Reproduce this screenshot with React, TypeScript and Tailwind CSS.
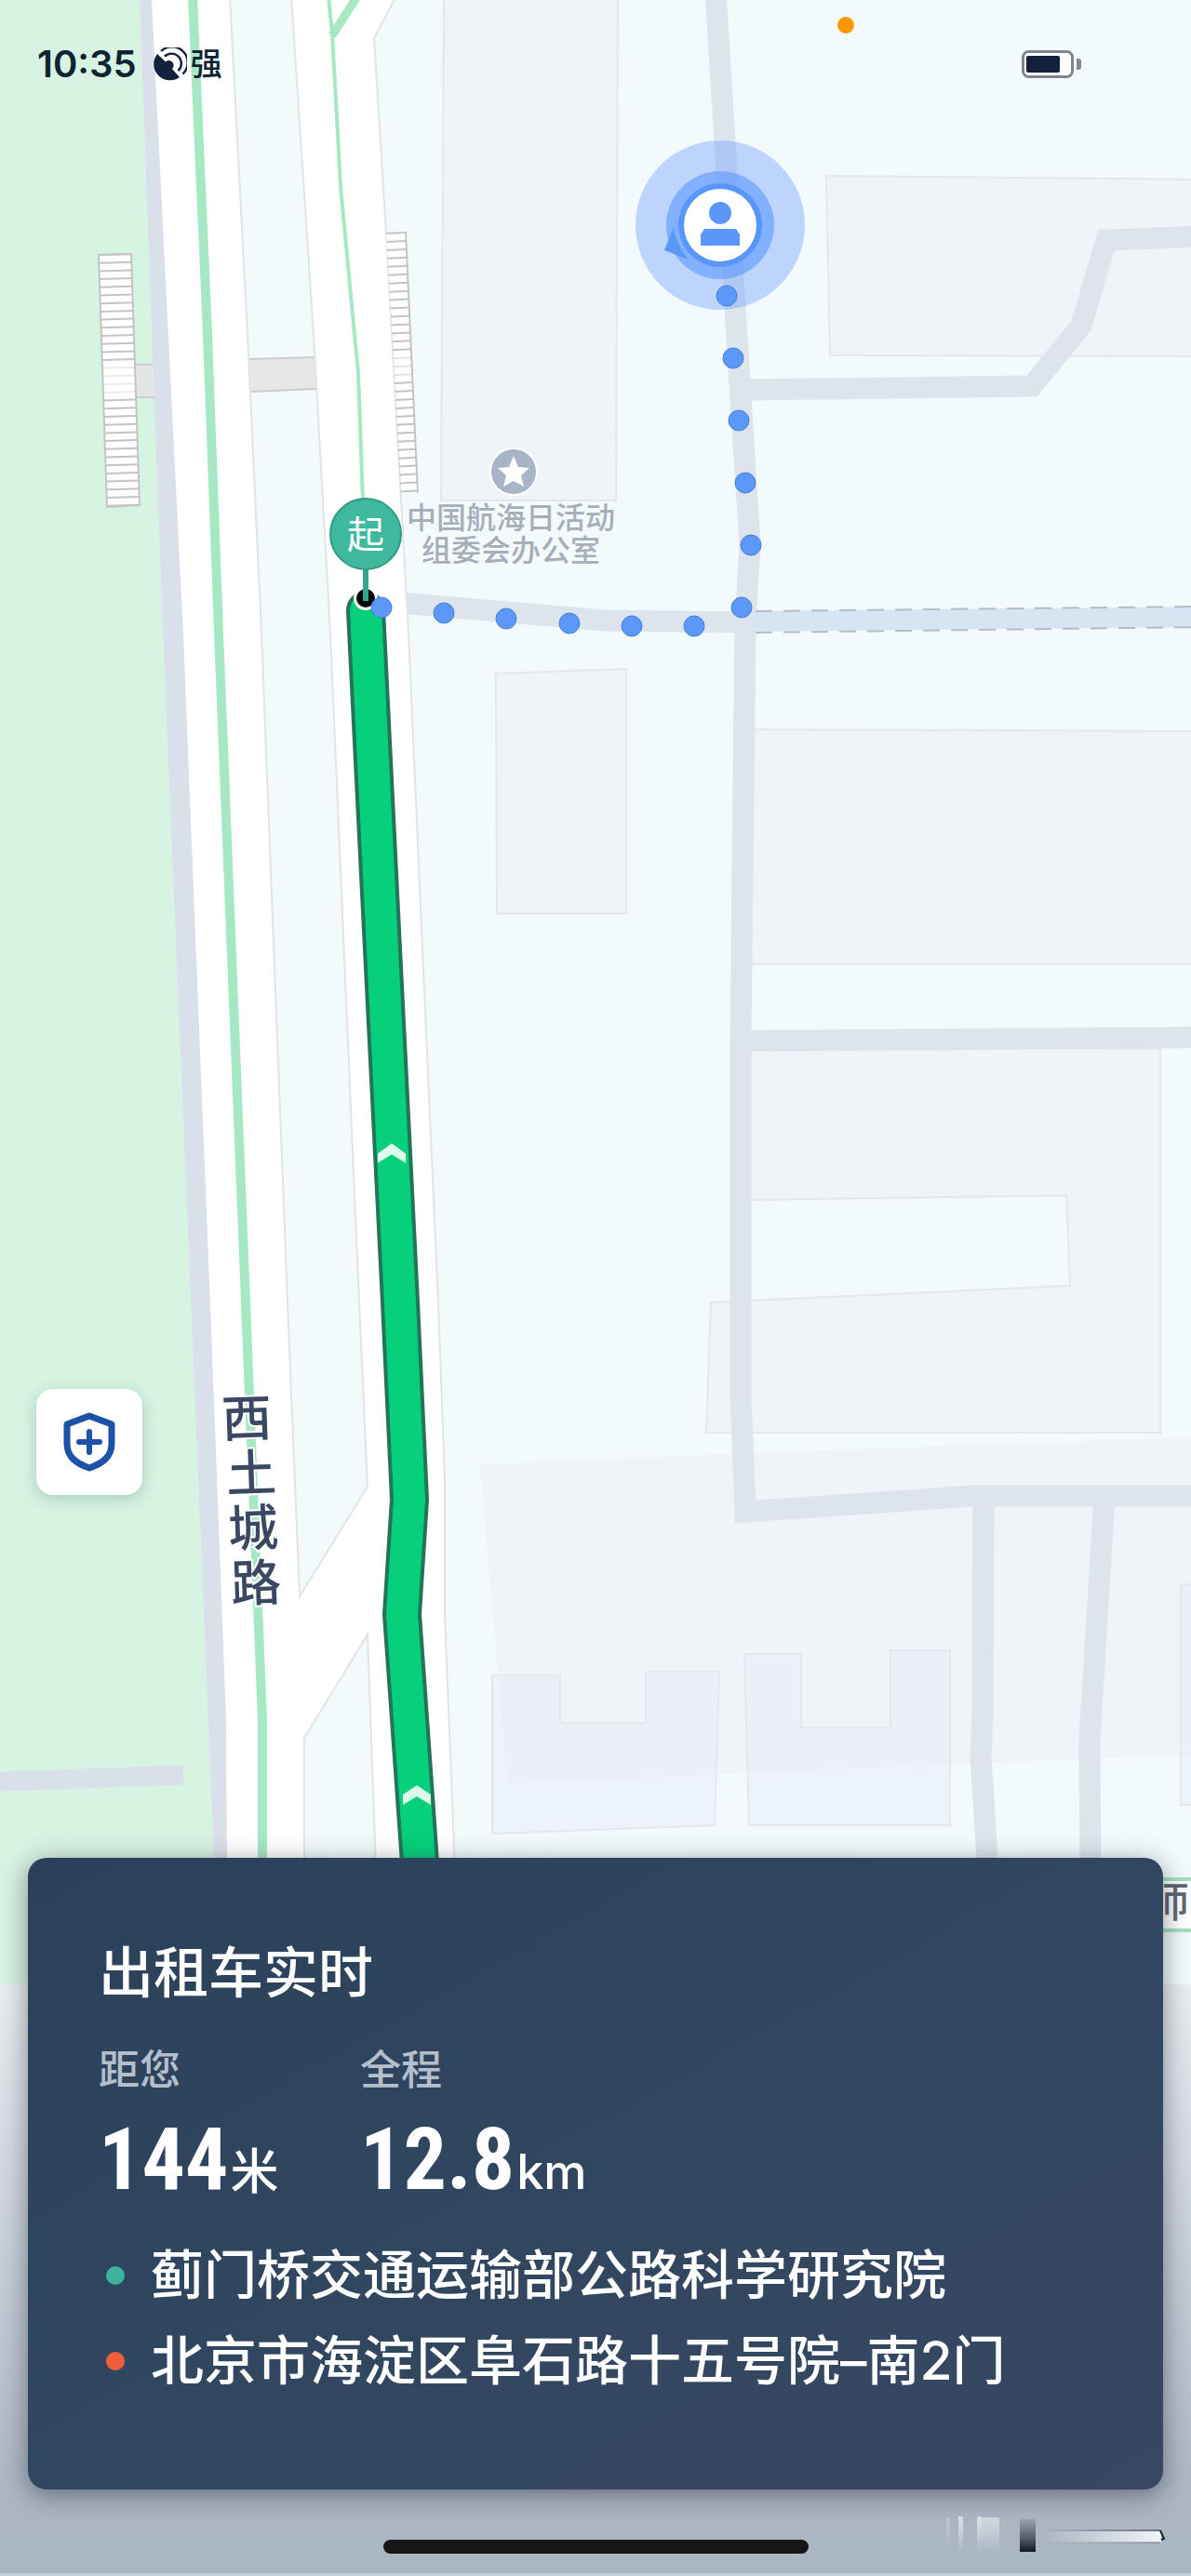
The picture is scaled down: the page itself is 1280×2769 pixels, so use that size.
interface Point {
  x: number
  y: number
}

interface Stat {
  id: string
  label: string
  value: string
  unit: string
}

interface Stop {
  id: string
  name: string
  dot: string
}

const STATS: Stat[] = [
  { id: 'distance', label: '距您', value: '144', unit: '米' },
  { id: 'total', label: '全程', value: '12.8', unit: 'km' },
]

const STOPS: Stop[] = [
  { id: 'from', name: '蓟门桥交通运输部公路科学研究院', dot: 'bg-[#3db39c]' },
  { id: 'to', name: '北京市海淀区阜石路十五号院–南2门', dot: 'bg-[#ee5f3a]' },
]

// Walking part of the trip, from the user to the pick-up point
const WALK_DOTS: Point[] = [
  { x: 781, y: 318 },
  { x: 788, y: 385 },
  { x: 794, y: 452 },
  { x: 801, y: 519 },
  { x: 807, y: 586 },
  { x: 797, y: 653 },
  { x: 746, y: 673 },
  { x: 679, y: 673 },
  { x: 612, y: 670 },
  { x: 544, y: 665 },
  { x: 477, y: 659 },
  { x: 410, y: 653 },
]

const BUILDINGS = [
  '477,-4 664,-4 662,538 474,538',
  '888,189 1290,193 1290,383 892,382',
  '533,724 673,719 673,982 534,982',
  '803,784 1290,786 1290,1036 803,1036',
  '803,1127 1247,1127 1247,1540 759,1540 764,1400 1150,1382 1146,1285 803,1290',
]

const CAMPUS_BUILDINGS = [
  '529,1801 602,1801 602,1852 694,1852 694,1797 773,1797 768,1962 529,1971',
  '800,1778 861,1778 861,1857 957,1857 957,1774 1021,1774 1021,1962 805,1962',
  '1269,1703 1290,1703 1290,1940 1269,1940',
]

const SIDE_ROADS = [
  'M769 -10 L798 460 L806 586 L801 670 L796 1120 L796 1500 L801 1625 L1046 1608 L1290 1608',
  'M800 419 L1109 415 L1162 350 L1189 258 L1290 254',
  'M430 648 L650 667 L800 669',
  'M796 1119 L1290 1115',
  'M1057 1608 L1056 1840 L1054 1890 L1062 2010',
  'M1187 1608 L1171 1870 L1172 2010',
]

const ROAD_NAME = [
  { char: '西', x: 265, y: 1524 },
  { char: '土', x: 270, y: 1583 },
  { char: '城', x: 272, y: 1642 },
  { char: '路', x: 275, y: 1701 },
]

const ROUTE = 'M393 656 L411 1020 L430 1400 L440 1612 L432 1735 L453 2030'

const STAIR_STEPS = Array.from({ length: 32 }, (_, i) => i)

function Stairs() {
  return (
    <g stroke="#c3c4c3" strokeWidth="2">
      <path d="M106 274 L141 273 L150 543 L115 545 Z" fill="#fff" />
      {STAIR_STEPS.map((i) => (
        <path
          key={`left-${i}`}
          d={`M${106 + i * 0.29} ${274 + i * 8.7} l35 -1`}
          opacity={i > 13 && i < 18 ? 0.35 : 1}
        />
      ))}
      <path d="M436 249 L449 530 L432 531 L415 250 Z" fill="#fff" stroke="none" />
      <path d="M436 249 L449 530" fill="none" />
      {STAIR_STEPS.map((i) => (
        <path
          key={`right-${i}`}
          d={`M${415 + i * 0.5} ${251 + i * 8.95} l${21 - i * 0.1} -1`}
          opacity={i > 14 && i < 18 ? 0.45 : 1}
        />
      ))}
    </g>
  )
}

function UserMarker() {
  return (
    <g>
      <circle cx="774" cy="242" r="91" fill="#6e9eff" fillOpacity="0.4" />
      <circle cx="774" cy="242" r="58" fill="#5c97fc" fillOpacity="0.6" />
      <path d="M724 244 L714 269 L740 279 Q727 264 724 244 Z" fill="#5b97f8" />
      <circle cx="774" cy="242" r="45" fill="#5896fa" />
      <circle cx="774" cy="242" r="39" fill="#fff" />
      <circle cx="774" cy="229" r="12" fill="#5b97f8" />
      <path d="M757 246 H791 L795 252 V264 H753 V252 Z" fill="#5b97f8" />
    </g>
  )
}

function MapCanvas() {
  return (
    <svg
      viewBox="0 0 1280 2769"
      preserveAspectRatio="xMidYMin slice"
      className="absolute inset-0 h-full w-full font-['Noto_Sans_CJK_SC',sans-serif]"
      role="img"
      aria-label="地图"
    >
      <defs>
        <linearGradient id="fade" x1="0" y1="0" x2="0" y2="1">
          <stop offset="0" stopColor="#eaedf1" />
          <stop offset="0.45" stopColor="#c8cfd8" />
          <stop offset="0.85" stopColor="#aeb7c3" />
          <stop offset="1" stopColor="#a9b6c1" />
        </linearGradient>
        <linearGradient id="glare" x1="0" y1="0" x2="0" y2="1">
          <stop offset="0" stopColor="#fff" stopOpacity="0.6" />
          <stop offset="1" stopColor="#fff" stopOpacity="0.05" />
        </linearGradient>
        <linearGradient id="block" x1="0" y1="0" x2="0" y2="1">
          <stop offset="0" stopColor="#9aa3ae" />
          <stop offset="0.6" stopColor="#525a66" />
          <stop offset="1" stopColor="#12171f" />
        </linearGradient>
        <linearGradient id="streak" x1="0" y1="0" x2="1" y2="0">
          <stop offset="0" stopColor="#e8edf2" stopOpacity="0" />
          <stop offset="1" stopColor="#f2f5f8" />
        </linearGradient>
        <linearGradient id="streakEdge" x1="0" y1="0" x2="1" y2="0">
          <stop offset="0" stopColor="#6b7480" stopOpacity="0" />
          <stop offset="1" stopColor="#6b7480" />
        </linearGradient>
      </defs>

      <rect width="1280" height="2769" fill="#f2fafc" />
      <path d="M0 0 H150 L163 360 L175 680 L205 1400 L230 2000 V2140 H0 Z" fill="#d7f3e2" />
      <path d="M516 1574 L800 1562 L1290 1545 V1885 L545 1917 Z" fill="#f0f3f8" />
      <g stroke="#e4e8ec" strokeWidth="2">
        {BUILDINGS.map((points) => (
          <polygon key={points} points={points} fill="#eff4f8" />
        ))}
        {CAMPUS_BUILDINGS.map((points) => (
          <polygon key={points} points={points} fill="#e4ebf8" fillOpacity="0.45" />
        ))}
      </g>

      {/* Side roads */}
      <g fill="none" stroke="#dde4eb" strokeWidth="23">
        {SIDE_ROADS.map((d) => (
          <path key={d} d={d} />
        ))}
        <path d="M0 1915 L197 1908" stroke="#d9e0ea" strokeWidth="21" />
      </g>
      <path d="M806 668 L1290 663" stroke="#d7e5f3" strokeWidth="22" />
      <g stroke="#b5bcc2" strokeWidth="2" strokeDasharray="18 12">
        <path d="M812 657 L1290 652" />
        <path d="M812 680 L1290 674" />
      </g>

      {/* Main roads with the islands between them */}
      <path
        d="M150 0 L163 360 L175 680 L205 1400 L230 2000 H250 L226 1400 L197 680 L163 0 Z"
        fill="#dae0ea"
      />
      <path
        d="M163 -4 L181 360 L197 680 L226 1400 L243 1850 L244 2010 H489 L478 1735 V1590 L471 1400 L454 1020 L439 680 L415 250 L402 41 L426 -4 Z"
        fill="#fff"
      />
      <path
        d="M489 2010 L478 1735 V1590 L471 1400 L454 1020 L439 680 L415 250 L402 41 L426 -4"
        fill="none"
        stroke="#e1e4e4"
        strokeWidth="2"
      />
      <g fill="#f2fafc" stroke="#e1e4e4" strokeWidth="2">
        <path d="M247 -4 L266 360 L281 680 L309 1400 L322 1716 L395 1598 L386 1400 L355 680 L337 360 L313 -4 Z" />
        <path d="M327 1868 L395 1757 L404 2010 H327 Z" />
      </g>
      <g fill="none" stroke="#a5e8c3">
        <path d="M207 -4 L223 360 L235 680 L264 1400 L282 1850 V2010" strokeWidth="10" />
        <path d="M353 -4 L357 36 L366 200 L381 360 L385 400 L390 540" strokeWidth="4" />
        <path d="M357 38 L384 -4" strokeWidth="9" />
      </g>

      {/* Footbridge */}
      <path d="M145 392 L164 392 L166 427 L146 427 Z" fill="#e3e6e4" />
      <path d="M268 386 L338 384 L340 418 L270 421 Z" fill="#e7e7e7" />
      <path
        d="M145 392 H164 M146 427 H166 M268 386 L338 384 M270 421 L340 418"
        stroke="#cbcdcc"
        strokeWidth="2"
      />
      <Stairs />

      {/* Driving route */}
      <g fill="none" strokeLinecap="round" strokeLinejoin="round">
        <path d={ROUTE} stroke="#23745a" strokeWidth="42" />
        <path d={ROUTE} stroke="#06d07b" strokeWidth="34" />
      </g>
      <g fill="#dcfbec">
        <path d="M406 1240 L421 1229 L436 1240 V1250 L421 1241 L406 1250 Z" />
        <path d="M433 1929 L448 1919 L463 1929 V1940 L448 1931 L433 1940 Z" />
      </g>

      <UserMarker />
      <circle cx="393" cy="643" r="13" fill="#fff" />
      <circle cx="393" cy="643" r="10" fill="#030806" />
      {WALK_DOTS.map((dot) => (
        <circle
          key={`${dot.x}-${dot.y}`}
          cx={dot.x}
          cy={dot.y}
          r="11"
          fill="#5b98fa"
          stroke="#4680d4"
        />
      ))}

      {/* Start pin */}
      <path d="M393 610 V646" stroke="#35a48c" strokeWidth="6" />
      <circle cx="393" cy="574" r="38" fill="#3eb99e" stroke="#329b83" strokeWidth="2" />
      <text x="393" y="589" textAnchor="middle" fill="#fff" className="text-[40px]">
        起
      </text>

      {/* Point of interest */}
      <circle cx="552" cy="507" r="26" fill="#fff" />
      <circle cx="552" cy="507" r="24" fill="#a9b4c6" />
      <path
        d="M552 490 L557 502 L569 503 L560 511 L563 523 L552 517 L541 523 L544 511 L535 503 L547 502 Z"
        fill="#fff"
      />
      <foreignObject x="429" y="540" width="240" height="80">
        <p className="text-center font-['Liberation_Sans','Noto_Sans_CJK_SC',sans-serif] text-[32px] leading-[35px] font-medium text-[#a8adba]">
          中国航海日活动
          <br />
          组委会办公室
        </p>
      </foreignObject>

      {/* Road names */}
      <g
        fill="#3a4861"
        stroke="#fff"
        strokeWidth="4"
        paintOrder="stroke"
        textAnchor="middle"
        className="text-[54px] font-medium"
      >
        {ROAD_NAME.map((item) => (
          <text
            key={item.char}
            x={item.x}
            y={item.y + 20}
            transform={`rotate(-2 ${item.x} ${item.y})`}
          >
            {item.char}
          </text>
        ))}
      </g>
      <path d="M1240 2020 H1280 V2075 H1240 Z" fill="#fff" />
      <path d="M1240 2020 H1280 M1240 2075 H1280" stroke="#a5e0c0" strokeWidth="4" />
      <text x="1234" y="2061" fill="#5d6676" className="text-[44px] font-medium">
        师
      </text>

      {/* Fade behind the trip card */}
      <rect y="2133" width="1280" height="636" fill="url(#fade)" />
      <rect y="2766" width="1280" height="3" fill="#c4d0db" />
      <g fill="url(#glare)">
        <rect x="1017" y="2706" width="4" height="30" opacity="0.4" />
        <rect x="1030" y="2705" width="5" height="36" />
        <rect x="1050" y="2705" width="5" height="38" />
        <rect x="1055" y="2706" width="19" height="36" opacity="0.8" />
      </g>
      <rect x="1096" y="2708" width="17" height="35" fill="url(#block)" />
      <rect x="1120" y="2721" width="128" height="12" fill="url(#streak)" />
      <rect x="1120" y="2719" width="127" height="2" fill="url(#streakEdge)" />
      <rect x="1120" y="2732" width="127" height="2" fill="url(#streakEdge)" opacity="0.5" />
      <path d="M1247 2720 L1251 2729 L1248 2730" fill="none" stroke="#1b212a" strokeWidth="2" />
    </svg>
  )
}

function SatelliteIcon() {
  return (
    <svg viewBox="0 0 36 36" className="size-9" fill="none" aria-hidden="true">
      <path
        d="M4 7 L13 15.5 A4.8 4.8 0 1 1 20 23 L28 32 A17.5 17.5 0 0 1 4 7 Z"
        fill="#14203c"
      />
      <g stroke="#14203c" strokeWidth="2.4">
        <path d="M8 4 A16.6 16.6 0 0 1 31.5 28.5" />
        <path d="M12 9.5 A10.6 10.6 0 0 1 26.5 25" />
      </g>
    </svg>
  )
}

function BatteryIcon() {
  return (
    <svg viewBox="0 0 64 30" className="h-[30px] w-16" aria-hidden="true">
      <rect x="1.5" y="1.5" width="53" height="27" rx="6" fill="#fff" stroke="#7f868b" strokeWidth="3" />
      <rect x="5" y="6" width="36" height="18" rx="2" fill="#14203c" />
      <path d="M59 9 H61 Q64 9 64 12 V18 Q64 21 61 21 H59 Z" fill="#84898d" />
    </svg>
  )
}

function StatusBar() {
  return (
    <header className="relative flex items-center px-10 pt-12 text-[#0f2432]">
      <span className="text-[40px] leading-[42px] font-semibold">10:35</span>
      <span className="ml-[18px] flex items-center gap-1">
        <SatelliteIcon />
        <span className="text-[34px] leading-[42px] font-medium">强</span>
      </span>
      <span className="absolute top-[18px] left-[71%] size-[18px] -translate-x-1/2 rounded-full bg-[#ff9500]" />
      <span className="mr-[78px] ml-auto">
        <BatteryIcon />
      </span>
    </header>
  )
}

function TripCard() {
  return (
    <section className="mx-[30px] rounded-[20px] bg-linear-to-br from-[#2b415a] via-[#31475f] to-[#384762] px-[76px] pt-[88px] pb-[92px] text-white shadow-[0_6px_28px_rgba(30,35,50,0.5)]">
      <h1 className="text-[59px] leading-[72px] font-medium">出租车实时</h1>
      <dl className="mt-10 flex">
        {STATS.map((stat) => (
          <div key={stat.id} className="min-w-[281px]">
            <dt className="text-[44px] leading-14 font-medium text-[#b5bfcb]">{stat.label}</dt>
            <dd className="flex items-baseline gap-0.5 pt-1 leading-[130px]">
              <span className="font-['Roboto_Condensed','Roboto',sans-serif] text-[92px] font-bold">
                {stat.value}
              </span>
              <span className="text-[52px] font-medium">{stat.unit}</span>
            </dd>
          </div>
        ))}
      </dl>
      <ul>
        {STOPS.map((stop) => (
          <li key={stop.id} className="flex items-center gap-[28px] pl-2">
            <span className={`size-5 shrink-0 rounded-full ${stop.dot}`} />
            <span className="text-[57px] leading-[92px] font-medium">{stop.name}</span>
          </li>
        ))}
      </ul>
    </section>
  )
}

export default function App() {
  return (
    <div className="relative flex min-h-screen flex-col overflow-hidden bg-[#f2fafc] font-['Inter','Noto_Sans_CJK_SC',sans-serif]">
      <MapCanvas />
      <StatusBar />

      <main className="relative flex flex-1 flex-col justify-end">
        <button
          type="button"
          aria-label="安全中心"
          className="mb-[390px] ml-[39px] flex size-[114px] items-center justify-center rounded-[18px] bg-white shadow-[0_4px_16px_rgba(40,90,70,0.25)]"
        >
          <svg viewBox="0 0 56 64" className="h-16 w-14" fill="none" stroke="#1d53a6" aria-hidden="true">
            <path
              d="M28 4 L52 13 V34 C52 48 42 55 28 60 C14 55 4 48 4 34 V13 Z"
              strokeWidth="7"
              strokeLinejoin="round"
            />
            <path d="M28 21 V43 M17 32 H39" strokeWidth="6" strokeLinecap="round" />
          </svg>
        </button>
        <TripCard />
      </main>

      {/* Home indicator */}
      <footer className="relative flex justify-center pt-[54px] pb-6">
        <span className="h-[15px] w-[457px] rounded-full bg-[#161616]" />
      </footer>
    </div>
  )
}
